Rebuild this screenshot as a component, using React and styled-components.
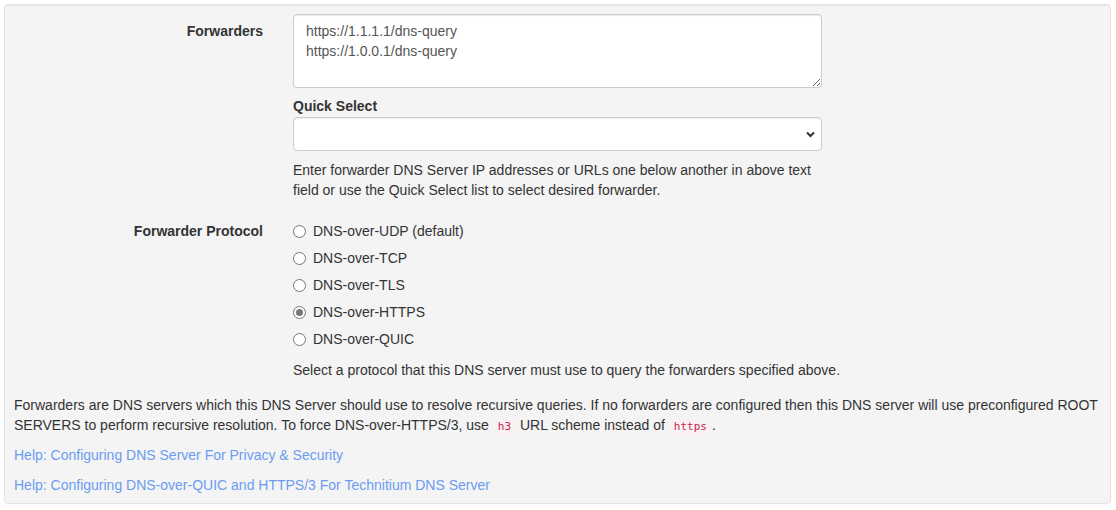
import styled, { createGlobalStyle } from "styled-components";

const GlobalStyle = createGlobalStyle`
  body {
    margin: 0;
    background: #ffffff;
    font-family: "Liberation Sans", Arial, Helvetica, sans-serif;
    font-size: 14px;
    line-height: 20px;
    color: #333333;
  }
  * {
    box-sizing: border-box;
  }
`;

const Well = styled.div`
  margin: 4px 5px 6px 4px;
  padding: 9px 9px 8px 9px;
  background: #f4f4f4;
  border: 1px solid #e3e3e3;
  border-radius: 4px;
  box-shadow: inset 0 1px 1px rgba(0, 0, 0, 0.05);
`;

const FormGroup = styled.div`
  display: grid;
  grid-template-columns: 249px 1fr;
  column-gap: 30px;
  margin-bottom: ${(p) => p.$mb || 14}px;
`;

const Label = styled.label`
  text-align: right;
  font-weight: 700;
  padding-top: 7px;
  line-height: 20px;
`;

const Field = styled.div`
  display: flex;
  flex-direction: column;
`;

const TextArea = styled.textarea`
  display: block;
  width: 529px;
  height: 74px;
  padding: 6px 12px;
  font-family: inherit;
  font-size: 14px;
  line-height: 20px;
  color: #555555;
  background: #ffffff;
  border: 1px solid #cccccc;
  border-radius: 4px;
  box-shadow: inset 0 1px 1px rgba(0, 0, 0, 0.075);
  resize: vertical;
  outline: none;
`;

const SubLabel = styled.label`
  font-weight: 700;
  margin-top: 8px;
  margin-bottom: 1px;
`;

const SelectWrap = styled.div`
  position: relative;
  width: 529px;
`;

const Select = styled.select`
  display: block;
  width: 100%;
  height: 34px;
  padding: 6px 12px;
  font-family: inherit;
  font-size: 14px;
  color: #555555;
  background: #ffffff;
  border: 1px solid #cccccc;
  border-radius: 4px;
  box-shadow: inset 0 1px 1px rgba(0, 0, 0, 0.075);
  appearance: none;
  outline: none;
`;

const Chevron = styled.svg`
  position: absolute;
  right: 7px;
  top: 14px;
  width: 9px;
  height: 7px;
  pointer-events: none;
`;

const HelpBlock = styled.div`
  margin-top: ${(p) => p.$mt || 9}px;
  max-width: ${(p) => (p.$narrow ? "529px" : "none")};
  color: #333333;
`;

const Radio = styled.label`
  display: flex;
  align-items: center;
  padding-top: 7px;
  height: 27px;
  cursor: pointer;
`;

const RadioInput = styled.input`
  appearance: none;
  width: 13px;
  height: 13px;
  margin: 0 7px 0 0;
  border: 1px solid #767676;
  border-radius: 50%;
  background: #ffffff;
  position: relative;
  flex-shrink: 0;
  &:checked::after {
    content: "";
    position: absolute;
    left: 2px;
    top: 2px;
    width: 7px;
    height: 7px;
    border-radius: 50%;
    background: #767676;
  }
`;

const Paragraph = styled.p`
  margin: 0 0 10px 0;
  &:last-child {
    margin-bottom: 0;
  }
`;

const Code = styled.code`
  font-family: "DejaVu Sans Mono", "Liberation Mono", monospace;
  font-size: 11px;
  line-height: 14px;
  padding: 2px 4px;
  margin: 0 1px;
  color: #c7254e;
  background: #f9f2f4;
  border-radius: 4px;
`;

const HelpLink = styled.a`
  color: #6b9cf2;
  text-decoration: none;
`;

const protocols = [
  "DNS-over-UDP (default)",
  "DNS-over-TCP",
  "DNS-over-TLS",
  "DNS-over-HTTPS",
  "DNS-over-QUIC",
];

export default function App() {
  return (
    <>
      <GlobalStyle />
      <Well>
        <FormGroup>
          <Label>Forwarders</Label>
          <Field>
            <TextArea
              defaultValue={"https://1.1.1.1/dns-query\nhttps://1.0.0.1/dns-query"}
            />
            <SubLabel>Quick Select</SubLabel>
            <SelectWrap>
              <Select defaultValue="">
                <option value=""></option>
              </Select>
              <Chevron viewBox="0 0 9 7">
                <path
                  d="M1 1.5 L4.5 5 L8 1.5"
                  fill="none"
                  stroke="#333"
                  strokeWidth="2"
                />
              </Chevron>
            </SelectWrap>
            <HelpBlock $narrow>
              Enter forwarder DNS Server IP addresses or URLs one below another
              in above text field or use the Quick Select list to select desired
              forwarder.
            </HelpBlock>
          </Field>
        </FormGroup>
        <FormGroup $mb={15}>
          <Label>Forwarder Protocol</Label>
          <Field>
            {protocols.map((p) => (
              <Radio key={p}>
                <RadioInput
                  type="radio"
                  name="protocol"
                  defaultChecked={p === "DNS-over-HTTPS"}
                />
                {p}
              </Radio>
            ))}
            <HelpBlock $mt={11}>
              Select a protocol that this DNS server must use to query the
              forwarders specified above.
            </HelpBlock>
          </Field>
        </FormGroup>
        <Paragraph>
          Forwarders are DNS servers which this DNS Server should use to resolve
          recursive queries. If no forwarders are configured then this DNS
          server will use preconfigured ROOT SERVERS to perform recursive
          resolution. To force DNS-over-HTTPS/3, use <Code>h3</Code> URL scheme
          instead of <Code>https</Code>.
        </Paragraph>
        <Paragraph>
          <HelpLink href="#">
            Help: Configuring DNS Server For Privacy &amp; Security
          </HelpLink>
        </Paragraph>
        <Paragraph>
          <HelpLink href="#">
            Help: Configuring DNS-over-QUIC and HTTPS/3 For Technitium DNS Server
          </HelpLink>
        </Paragraph>
      </Well>
    </>
  );
}
